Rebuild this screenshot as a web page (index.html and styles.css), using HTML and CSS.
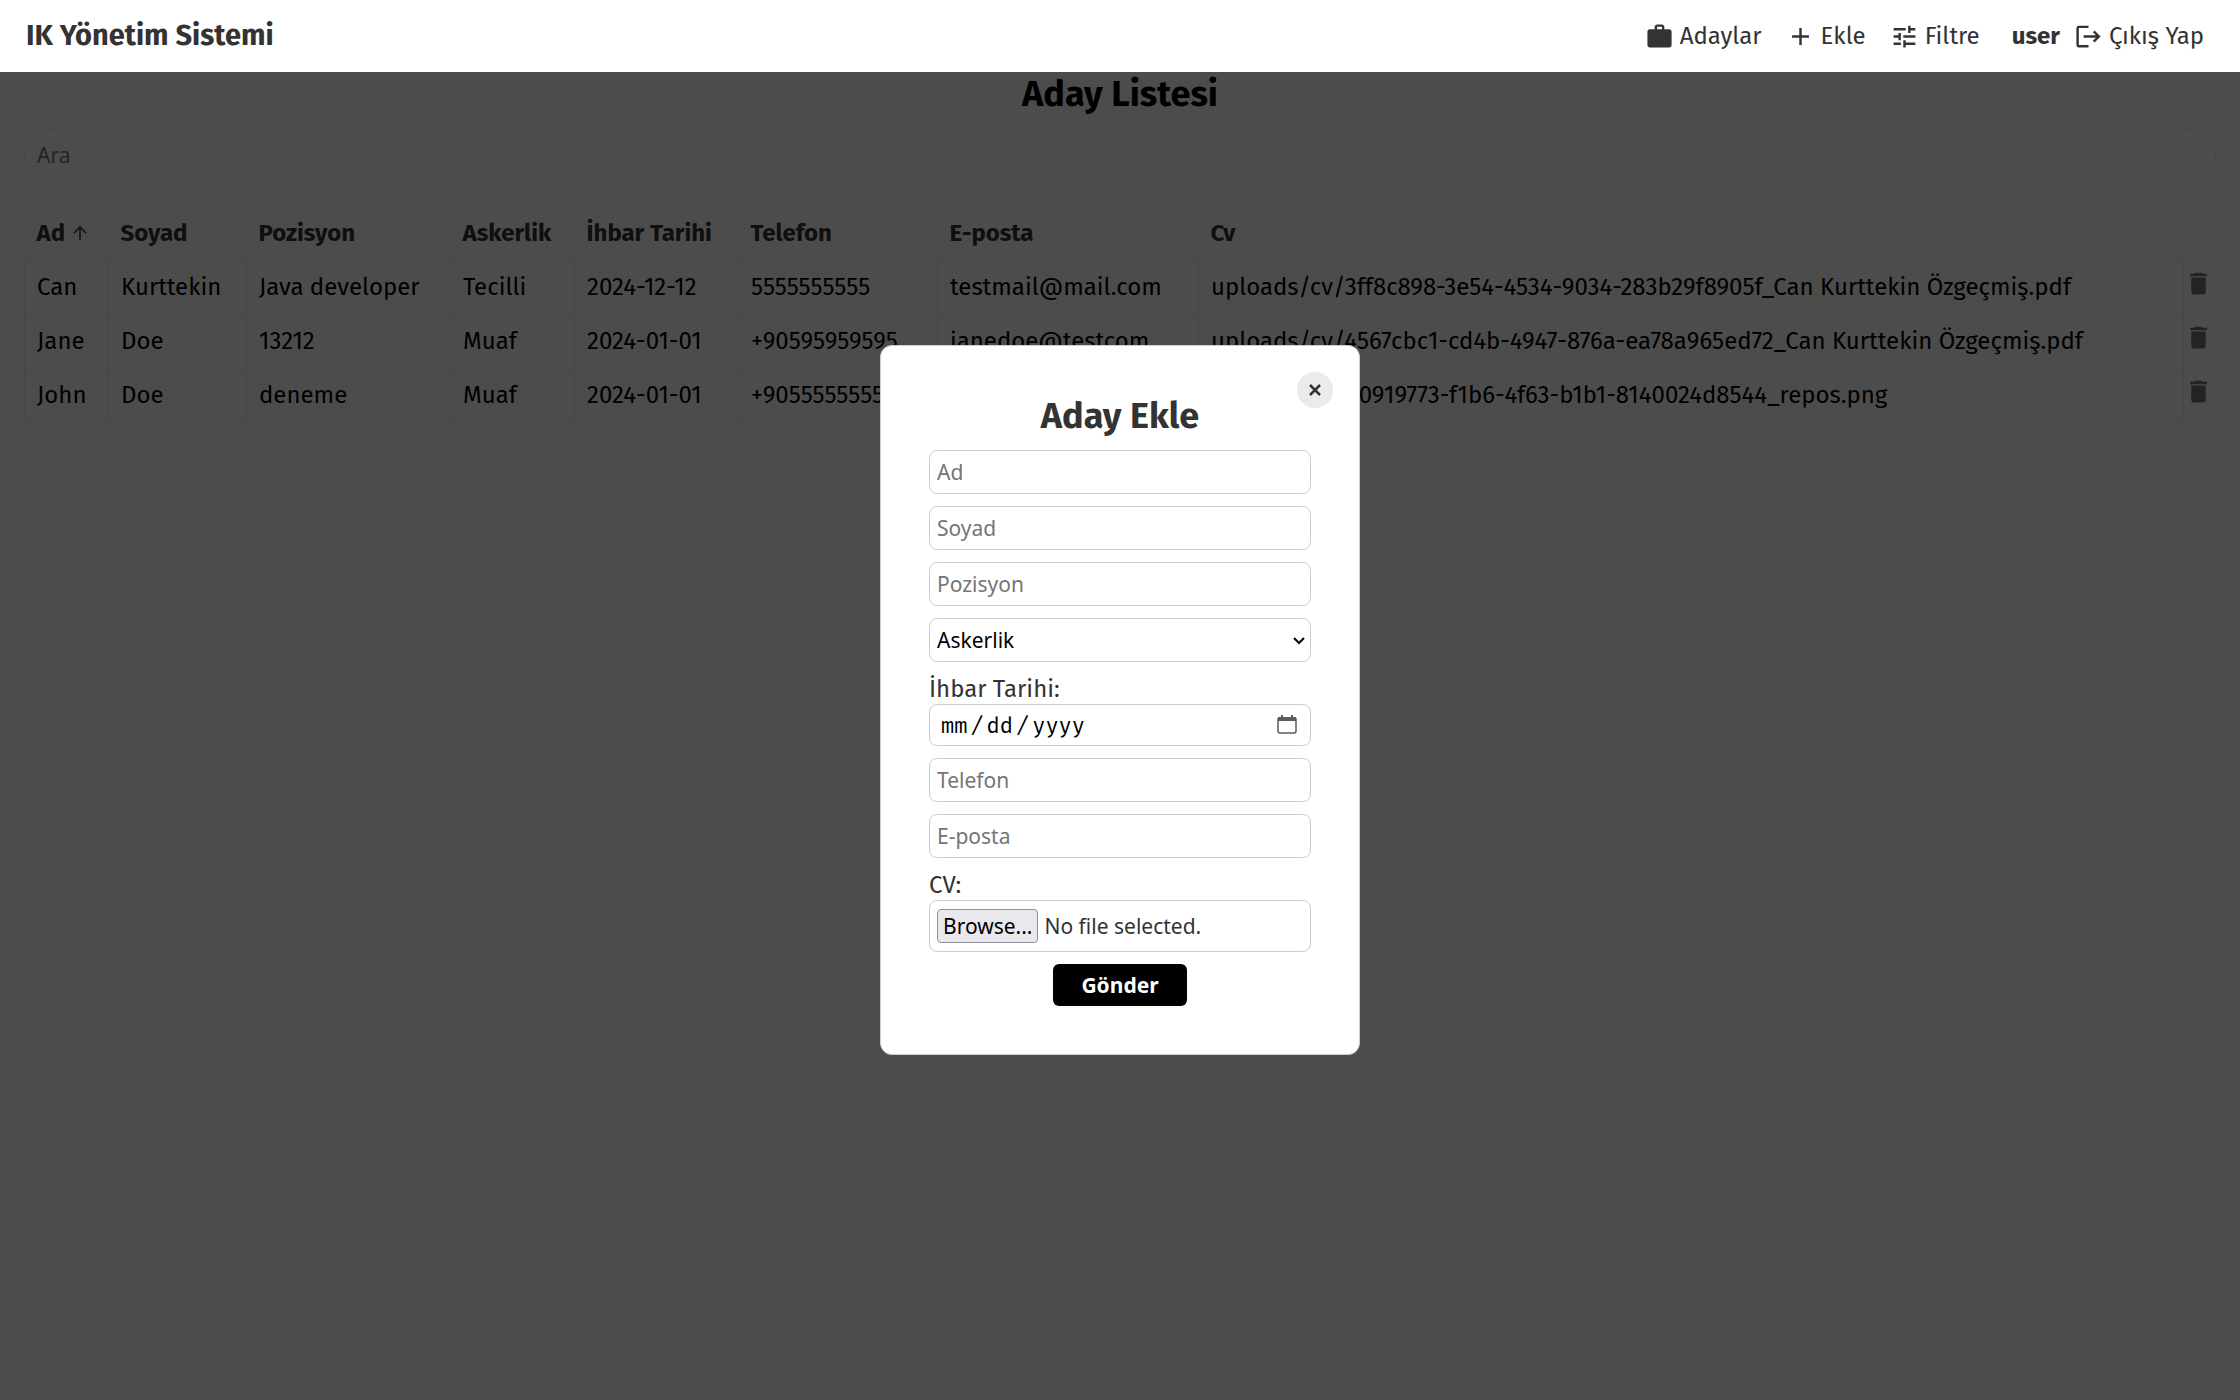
FILE: index.html
```html
<!DOCTYPE html>
<html lang="tr">
<head>
<meta charset="utf-8">
<title>IK Yönetim Sistemi</title>
<link rel="stylesheet" href="styles.css">
</head>
<body>
<header class="navbar">
  <h1 class="brand">IK Yönetim Sistemi</h1>
  <nav class="nav-links">
    <a href="#" class="nav-item"><svg class="icon" viewBox="0 0 24 24"><path d="M20 6h-4V4c0-1.100-.9-2-2-2h-4c-1.100 0-2 .9-2 2v2H4c-1.100 0-2 .9-2 2v11c0 1.100.9 2 2 2h16c1.100 0 2-.9 2-2V8c0-1.100-.9-2-2-2zm-6 0h-4V4h4v2z"/></svg>Adaylar</a>
    <a href="#" class="nav-item"><svg class="icon" viewBox="0 0 24 24"><path d="M19 13h-6v6h-2v-6H5v-2h6V5h2v6h6v2z"/></svg>Ekle</a>
    <a href="#" class="nav-item"><svg class="icon" viewBox="0 0 24 24"><path d="M3 17v2h6v-2H3zM3 5v2h10V5H3zm10 16v-2h8v-2h-8v-2h-2v6h2zM7 9v2H3v2h4v2h2V9H7zm14 4v-2H11v2h10zm-6-4h2V7h4V5h-4V3h-2v6z"/></svg>Filtre</a>
    <span class="account"><strong>user</strong><a href="#" class="nav-item"><svg class="icon" viewBox="0 0 24 24"><path d="M17 7l-1.410 1.410L18.170 11H8v2h10.170l-2.580 2.580L17 17l5-5zM4 5h8V3H4c-1.100 0-2 .9-2 2v14c0 1.100.9 2 2 2h8v-2H4V5z"/></svg>Çıkış Yap</a></span>
  </nav>
</header>

<main class="page">
  <h2 class="page-title">Aday Listesi</h2>
  <input class="search" type="search" placeholder="Ara" aria-label="Ara">
  <table class="candidates">
    <colgroup><col class="c-name"><col class="c-surname"><col class="c-position"><col class="c-military"><col class="c-notice"><col class="c-phone"><col class="c-email"><col><col class="c-action"></colgroup>
    <thead>
      <tr><th>Ad <svg class="sort" viewBox="0 0 14 16"><path d="M7 15V2M1 8l6-6 6 6"/></svg></th><th>Soyad</th><th>Pozisyon</th><th>Askerlik</th><th>İhbar Tarihi</th><th>Telefon</th><th>E-posta</th><th>Cv</th><td class="action"></td></tr>
    </thead>
    <tbody>
      <tr><td>Can</td><td>Kurttekin</td><td>Java developer</td><td>Tecilli</td><td>2024-12-12</td><td>5555555555</td><td>testmail@mail.com</td><td>uploads/cv/3ff8c898-3e54-4534-9034-283b29f8905f_Can Kurttekin Özgeçmiş.pdf</td><td class="action"><button class="delete" aria-label="Sil"><svg class="icon" viewBox="0 0 24 24"><path d="M6 19c0 1.100.9 2 2 2h8c1.100 0 2-.9 2-2V7H6v12zM19 4h-3.500l-1-1h-5l-1 1H5v2h14V4z"/></svg></button></td></tr>
      <tr><td>Jane</td><td>Doe</td><td>13212</td><td>Muaf</td><td>2024-01-01</td><td>+90595959595</td><td>janedoe@testcom</td><td>uploads/cv/4567cbc1-cd4b-4947-876a-ea78a965ed72_Can Kurttekin Özgeçmiş.pdf</td><td class="action"><button class="delete" aria-label="Sil"><svg class="icon" viewBox="0 0 24 24"><path d="M6 19c0 1.100.9 2 2 2h8c1.100 0 2-.9 2-2V7H6v12zM19 4h-3.500l-1-1h-5l-1 1H5v2h14V4z"/></svg></button></td></tr>
      <tr><td>John</td><td>Doe</td><td>deneme</td><td>Muaf</td><td>2024-01-01</td><td>+90555555555</td><td></td><td>uploads/cv/d0919773-f1b6-4f63-b1b1-8140024d8544_repos.png</td><td class="action"><button class="delete" aria-label="Sil"><svg class="icon" viewBox="0 0 24 24"><path d="M6 19c0 1.100.9 2 2 2h8c1.100 0 2-.9 2-2V7H6v12zM19 4h-3.500l-1-1h-5l-1 1H5v2h14V4z"/></svg></button></td></tr>
    </tbody>
  </table>
</main>

<div class="overlay">
  <form class="modal" role="dialog" aria-labelledby="modal-title">
    <button type="button" class="close" aria-label="Kapat"><svg viewBox="0 0 12 12"><path d="M1 1l10 10M11 1L1 11"/></svg></button>
    <h2 class="modal-title" id="modal-title">Aday Ekle</h2>
    <input class="field" type="text" placeholder="Ad" aria-label="Ad">
    <input class="field" type="text" placeholder="Soyad" aria-label="Soyad">
    <input class="field" type="text" placeholder="Pozisyon" aria-label="Pozisyon">
    <div class="select-wrap">
      <select class="field" aria-label="Askerlik"><option>Askerlik</option><option>Muaf</option><option>Tecilli</option></select>
      <svg class="chevron" viewBox="0 0 12 8"><path d="M1 1l5 5 5-5"/></svg>
    </div>
    <div class="group">
      <label for="notice">İhbar Tarihi:</label>
      <div class="select-wrap">
        <input class="field date" id="notice" type="date">
        <svg class="calendar" viewBox="0 0 20 20"><path class="frame" d="M2 4h16a1 1 0 0 1 1 1v12a2 2 0 0 1-2 2H3a2 2 0 0 1-2-2V5a1 1 0 0 1 1-1z"/><path class="solid" d="M1 3h18v4H1zM4 1h2v3H4zM14 1h2v3h-2z"/></svg>
      </div>
    </div>
    <input class="field" type="tel" placeholder="Telefon" aria-label="Telefon">
    <input class="field" type="email" placeholder="E-posta" aria-label="E-posta">
    <div class="group">
      <label for="cv">CV:</label>
      <label class="file" for="cv"><input class="file-input" id="cv" type="file"><span class="browse">Browse...</span><span>No file selected.</span></label>
    </div>
    <button type="submit" class="submit">Gönder</button>
  </form>
</div>
</body>
</html>
```
FILE: styles.css
```css
* { box-sizing: border-box; }
body {
  margin: 0;
  background: #fff;
  color: #000;
  font: 24px/30px "Fira Sans", "Noto Sans", sans-serif;
}
h1, h2 { margin: 0; }
button, input, select { font-family: "Noto Sans", sans-serif; }

/* Navigation */
.navbar {
  position: sticky;
  top: 0;
  z-index: 20;
  display: flex;
  align-items: center;
  justify-content: space-between;
  height: 72px;
  padding: 0 36px 0 26px;
  background: #fff;
  color: #333;
}
.brand { font-size: 29px; line-height: 36px; }
.nav-links { display: flex; align-items: center; gap: 24px; }
.nav-item { display: flex; align-items: center; gap: 6px; color: inherit; text-decoration: none; }
.account { display: flex; align-items: center; gap: 14px; margin-left: 8px; }
.icon { display: block; width: 29px; height: 29px; fill: currentColor; }

/* Candidate list */
.page { padding: 0 24px; }
.page-title { font-size: 36px; line-height: 44px; text-align: center; }
.search {
  display: block;
  width: 100%;
  height: 54px;
  margin: 12px 0 24px;
  padding: 0 12px;
  border: 1px solid #ededed;
  border-radius: 27px;
  background: #fff;
  font-size: 21px;
}
::placeholder { color: #757575; opacity: 1; }
.candidates { width: 100%; border-collapse: collapse; table-layout: fixed; }
.candidates th, .candidates td { height: 54px; padding: 0 12px; text-align: left; white-space: nowrap; }
.candidates th { color: #333; }
.candidates tbody td { border: 1px solid #ededed; }
.candidates td.action { padding: 0; border: 0; }
.c-name { width: 84px; }
.c-surname { width: 138px; }
.c-position { width: 204px; }
.c-military { width: 124px; }
.c-notice { width: 164px; }
.c-phone { width: 199px; }
.c-email { width: 261px; }
.c-action { width: 32px; }
.sort { width: 14px; height: 16px; margin-left: 2px; fill: none; stroke: #333; stroke-width: 1.5; }
.delete { display: block; margin-bottom: 8px; padding: 0; border: 0; background: none; color: #757575; }

/* Dialog */
.overlay {
  position: fixed;
  inset: 0;
  z-index: 10;
  display: flex;
  align-items: center;
  justify-content: center;
  background: rgba(0, 0, 0, 0.7);
}
.modal {
  position: relative;
  display: flex;
  flex-direction: column;
  gap: 12px;
  width: 480px;
  padding: 48px;
  border: 1px solid #ccc;
  border-radius: 12px;
  background: #fff;
  color: #333;
}
.modal-title { font-size: 36px; line-height: 44px; text-align: center; }
.close {
  position: absolute;
  top: 26px;
  right: 26px;
  display: grid;
  place-items: center;
  width: 36px;
  height: 36px;
  padding: 0;
  border: 0;
  border-radius: 50%;
  background: #ebebeb;
}
.close svg { width: 12px; height: 12px; fill: none; stroke: #333; stroke-width: 2.5; }
.field {
  display: block;
  width: 100%;
  height: 44px;
  padding: 0 7px;
  border: 1px solid #ccc;
  border-radius: 8px;
  background: #fff;
  color: #000;
  font-size: 21px;
  appearance: none;
}
.select-wrap { position: relative; }
.chevron {
  position: absolute;
  top: 19px;
  right: 6px;
  width: 12px;
  height: 8px;
  fill: none;
  stroke: #000;
  stroke-width: 2;
  pointer-events: none;
}
.group { display: flex; flex-direction: column; }
.date { height: 42px; padding: 0 10px; font-family: "Fira Mono", "Liberation Mono", monospace; font-size: 22px; }
.date::-webkit-datetime-edit-text { padding: 0 2px; }
.date::-webkit-calendar-picker-indicator { opacity: 0; }
.calendar { position: absolute; top: 10px; right: 14px; width: 20px; height: 20px; pointer-events: none; }
.calendar .frame { fill: none; stroke: #5b5b5b; stroke-width: 1.5; }
.calendar .solid { fill: #5b5b5b; }
.file {
  display: flex;
  align-items: center;
  gap: 6px;
  height: 52px;
  padding: 0 7px;
  border: 1px solid #ccc;
  border-radius: 8px;
  font-family: "Noto Sans", sans-serif;
  font-size: 21px;
}
.file-input { position: absolute; width: 1px; height: 1px; opacity: 0; }
.browse {
  height: 34px;
  padding: 0 5px;
  border: 1px solid #8f8f9d;
  border-radius: 4px;
  background: #e9e9ed;
  color: #000;
  line-height: 32px;
}
.submit {
  align-self: center;
  width: 134px;
  height: 42px;
  border: 0;
  border-radius: 6px;
  background: #000;
  color: #fff;
  font-size: 21px;
  font-weight: 700;
}
```
